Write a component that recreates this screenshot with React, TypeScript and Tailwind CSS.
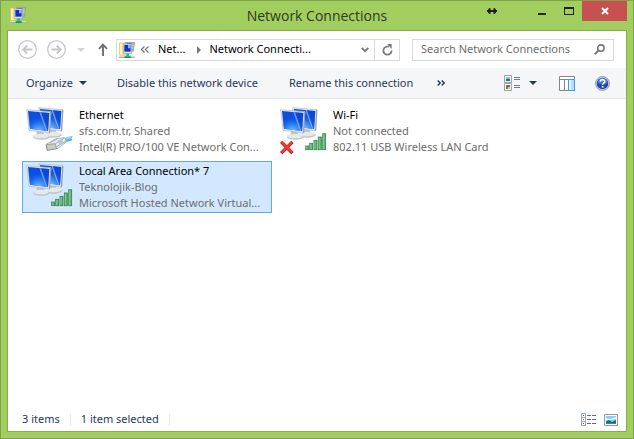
import React, { useState } from "react";
import clsx from "clsx";

type Status = "ethernet" | "wifi" | "disconnected";

interface Connection {
  name: string;
  state: string;
  device: string;
  status: Status;
}

const connections: Connection[] = [
  {
    name: "Ethernet",
    state: "sfs.com.tr, Shared",
    device: "Intel(R) PRO/100 VE Network Con...",
    status: "ethernet",
  },
  {
    name: "Wi-Fi",
    state: "Not connected",
    device: "802.11 USB Wireless LAN Card",
    status: "disconnected",
  },
  {
    name: "Local Area Connection* 7",
    state: "Teknolojik-Blog",
    device: "Microsoft Hosted Network Virtual...",
    status: "wifi",
  },
];

function NetworkFolderIcon() {
  return (
    <svg className="shrink-0" width="16" height="16" viewBox="0 0 48 48" aria-hidden="true">
      <path d="M1 3h18v36l-12 3-6-3z" fill="#f5df86" stroke="#d8bd63" strokeWidth="2" />
      <path d="M3 5h7v34H3z" fill="#fdf0b0" />
      <path d="M19 1h28l-4 27H20z" fill="#aeb7c0" stroke="#8993a0" strokeWidth="2" />
      <path d="M23 4h20l-3 20H24z" fill="#3c5cc8" />
      <path d="M38 4h6l-2 18h-5z" fill="#d9cd96" />
      <path d="M13 6h25v28H13z" fill="#e6ebf1" stroke="#8b98a8" strokeWidth="2" />
      <path d="M16 9h19v20H16z" fill="#1430c0" />
      <path d="M27 9h8v10h-8z" fill="#86aef6" />
      <path d="M0 42h47v5H0z" fill="#d4dbe0" />
      <path d="M0 45h47v3H0z" fill="#a5afb6" />
      <path d="M22 35h8v6h5v7H17v-7h5z" fill="#12c073" />
      <path d="M17 45h18v3H17z" fill="#0b9358" />
    </svg>
  );
}

function Monitor({ x, y }: { x: number; y: number }) {
  return (
    <g transform={`translate(${x} ${y})`}>
      <path d="M30 62h20l4 17H30z" fill="#bfc3c6" />
      <ellipse cx="44" cy="82" rx="25" ry="8" fill="#c0c4c7" />
      <ellipse cx="43" cy="79" rx="23" ry="7" fill="#e6e8ea" />
      <path d="M0 0 L73 6 L69 70 L7 62z" fill="#dfe3e6" stroke="#b4babf" strokeWidth="2" />
      <path d="M71 6l3 0-4 64-3 0z" fill="#8f9aa3" />
      <path d="M4 4 L68 10 L64 64 L10 57z" fill="#0b4ee0" />
      <path d="M4 4 L68 10 L64 64 L10 57z" fill="url(#glow)" />
      <path d="M38 7 L68 10 L64 64 L59 63z" fill="#0a3fc4" opacity="0.35" />
      <path d="M38 7l5 1 19 55-4 0z" fill="#c4e2ff" opacity="0.55" />
    </g>
  );
}

function SignalBars() {
  const bars = [
    [95, 138],
    [107, 130],
    [120, 121],
    [133, 111],
    [146, 101],
  ];
  return (
    <g>
      {bars.map(([x, y]) => (
        <rect
          key={x}
          x={x}
          y={y}
          width="9"
          height={149 - y}
          fill="url(#bar)"
          stroke="#3b8250"
          strokeWidth="2.5"
        />
      ))}
    </g>
  );
}

function EthernetPlug() {
  return (
    <g>
      <path d="M126 121l14-9 18-4-4 8 4 5-18 4-10 5z" fill="#4db4e4" />
      <path d="M134 115l22-6-4 6-16 5z" fill="#9bdcf6" />
      <path
        d="M78 133l30-17 26-3 6 12-26 20-32 6z"
        fill="#e6edf2"
        stroke="#8796a3"
        strokeWidth="2"
      />
      <path d="M79 134l26-3 5 15-28 5z" fill="#c3ccd3" stroke="#71808d" strokeWidth="2" />
      <path d="M85 137v10M91 136v11M97 135v10M103 134v10" stroke="#e0d080" strokeWidth="3" />
      <path d="M106 131l26-16M110 140l28-17M90 128l20-10" stroke="#7d8e9c" strokeWidth="2" />
      <path d="M112 121l14-3 3 8-12 7z" fill="#b7c6d1" />
    </g>
  );
}

function ConnectionIcon({ status }: { status: Status }) {
  return (
    <svg
      className="shrink-0"
      width="48"
      height="48"
      viewBox="18 21 144 144"
      aria-hidden="true"
    >
      <defs>
        <radialGradient id="glow" cx="0.5" cy="1" r="0.75">
          <stop offset="0" stopColor="#7cc4ff" />
          <stop offset="0.5" stopColor="#2f86f6" stopOpacity="0.8" />
          <stop offset="1" stopColor="#0b4ee0" stopOpacity="0" />
        </radialGradient>
        <linearGradient id="bar" x1="0" y1="0" x2="1" y2="0">
          <stop offset="0" stopColor="#9ad8a6" />
          <stop offset="1" stopColor="#4aa463" />
        </linearGradient>
      </defs>
      <Monitor x={56} y={23} />
      <Monitor x={20} y={29} />
      {status === "ethernet" ? <EthernetPlug /> : <SignalBars />}
      {status === "disconnected" && (
        <g strokeLinecap="square">
          <path d="M25 129l27 27M52 129l-27 27" stroke="#b5201b" strokeWidth="10" />
          <path d="M25 128l27 27M52 128l-27 27" stroke="#ea3b35" strokeWidth="7" />
        </g>
      )}
    </svg>
  );
}

function TitleBar() {
  return (
    <header className="grid h-[29px] grid-cols-[1fr_auto_1fr] items-start">
      <div className="pt-[6px] pl-[9px]">
        <NetworkFolderIcon />
      </div>
      <h1 className="font-['Open_Sans',sans-serif] text-[14px] leading-[29px] text-[#2e3a20]">
        Network Connections
      </h1>
      <div className="flex justify-end pr-[6px] text-[#222]">
        <button aria-label="Resize" className="mr-7 flex h-5 w-4 items-center justify-center">
          <svg width="12" height="8" viewBox="0 0 12 8">
            <path d="M2 4h8" stroke="currentColor" strokeWidth="2" />
            <path d="M1 4l3-3v6zM11 4L8 1v6z" fill="currentColor" stroke="currentColor" />
          </svg>
        </button>
        <button aria-label="Minimize" className="flex h-5 w-7 items-center justify-center">
          <svg width="8" height="10" viewBox="0 0 8 10">
            <path d="M0 7h8v2H0z" fill="currentColor" />
          </svg>
        </button>
        <button aria-label="Maximize" className="flex h-5 w-[26px] items-center justify-center">
          <svg width="10" height="8" viewBox="0 0 10 8">
            <path d="M0 0h10v8H0zM1 2v5h8V2z" fill="currentColor" fillRule="evenodd" />
          </svg>
        </button>
        <button
          aria-label="Close"
          className="flex h-5 w-[45px] items-center justify-center bg-[#c75050] text-white"
        >
          <svg width="8" height="8" viewBox="0 0 8 8">
            <path d="M1 1l6 6M7 1L1 7" stroke="currentColor" strokeWidth="2" />
          </svg>
        </button>
      </div>
    </header>
  );
}

function RoundArrow({ label, flip }: { label: string; flip?: boolean }) {
  return (
    <button aria-label={label} className="shrink-0 text-[#c6c6c6]">
      <svg
        width="19"
        height="19"
        viewBox="0 0 19 19"
        fill="none"
        stroke="currentColor"
        className={clsx(flip && "-scale-x-100")}
      >
        <circle cx="9.5" cy="9.5" r="8.8" strokeWidth="1.2" />
        <path d="M5.5 9.5h9M9.3 5.5l-4 4 4 4" strokeWidth="1.9" />
      </svg>
    </button>
  );
}

function AddressRow() {
  return (
    <div className="flex h-[37px] items-center pr-3 pl-[10px]">
      <RoundArrow label="Back" />
      <div className="w-[10px] shrink-0" />
      <RoundArrow label="Forward" flip />
      <button aria-label="Recent locations" className="ml-[11px] shrink-0">
        <svg width="8" height="4" viewBox="0 0 8 4">
          <path d="M0 0h8L4 4z" fill="#d4d4d4" />
        </svg>
      </button>
      <button aria-label="Up" className="mr-2 ml-[13px] shrink-0">
        <svg width="10" height="13" viewBox="0 0 10 13" fill="none" stroke="#6e6e6e">
          <path d="M5 13V2M1 5.8L5 1.6l4 4.2" strokeWidth="1.9" />
        </svg>
      </button>
      <nav
        aria-label="Address"
        className="flex h-[22px] min-w-0 flex-1 items-center border border-[#d9d9d9] pl-[2px]"
      >
        <NetworkFolderIcon />
        <button aria-label="Earlier locations" className="ml-[6px]">
          <svg width="8" height="7" viewBox="0 0 8 7" fill="none" stroke="#777" strokeWidth="1.3">
            <path d="M3.5.5l-3 3 3 3M7.5.5l-3 3 3 3" />
          </svg>
        </button>
        <button className="ml-[9px]">Net...</button>
        <svg className="mr-2 ml-3 shrink-0" width="4" height="8" viewBox="0 0 4 8" aria-hidden="true">
          <path d="M0 0l4 4-4 4z" fill="#777" />
        </svg>
        <button className="truncate">Network Connecti...</button>
        <button aria-label="Previous locations" className="mr-[5px] ml-auto shrink-0">
          <svg width="8" height="6" viewBox="0 0 8 6" fill="none" stroke="#777" strokeWidth="1.9">
            <path d="M.7.8L4 4.2 7.3.8" />
          </svg>
        </button>
        <button
          aria-label="Refresh"
          className="flex h-full w-[25px] shrink-0 items-center justify-center border-l border-[#d9d9d9]"
        >
          <svg width="11" height="12" viewBox="0 0 11 12">
            <path
              d="M7 2.8A4.1 4.1 0 1 0 9.6 6.6"
              fill="none"
              stroke="#777"
              strokeWidth="1.7"
            />
            <path d="M5.2 0h4.4v5z" fill="#777" />
          </svg>
        </button>
      </nav>
      <div className="ml-3 flex h-[22px] w-[202px] shrink-0 items-center border border-[#d9d9d9] pr-2 pl-2">
        <input
          type="search"
          aria-label="Search Network Connections"
          placeholder="Search Network Connections"
          className="min-w-0 flex-1 outline-none placeholder:text-[#6d6d6d]"
        />
        <svg width="11" height="11" viewBox="0 0 11 11" fill="none" stroke="#777" aria-hidden="true">
          <circle cx="6.9" cy="4.1" r="3.2" strokeWidth="1.6" />
          <path d="M4.6 6.4L.8 10.2" strokeWidth="2" />
        </svg>
      </div>
    </div>
  );
}

function DownCaret() {
  return (
    <svg width="8" height="4" viewBox="0 0 8 4" aria-hidden="true">
      <path d="M0 0h8L4 4z" fill="#1e395b" />
    </svg>
  );
}

function CommandBar() {
  return (
    <div
      role="toolbar"
      className="flex h-[31px] items-center border-b border-[#e3e5e8] bg-[#f5f6f7] pr-4 pl-[18px] text-[#1e395b]"
    >
      <button className="flex items-center gap-[6px]">
        Organize
        <DownCaret />
      </button>
      <button className="ml-[30px] whitespace-nowrap">Disable this network device</button>
      <button className="ml-[31px] whitespace-nowrap">Rename this connection</button>
      <button aria-label="More commands" className="ml-6">
        <svg width="8" height="6" viewBox="0 0 8 6" fill="none" stroke="#1e395b" strokeWidth="1.4">
          <path d="M.7.5L3.2 3 .7 5.5M4.7.5L7.2 3 4.7 5.5" />
        </svg>
      </button>
      <button aria-label="Change your view" className="ml-auto">
        <svg width="16" height="16" viewBox="0 0 16 16">
          <path d="M.5.5h7v7h-7zM.5 8.5h7v7h-7z" fill="#fff" stroke="#9aa3ad" />
          <path d="M2 2h4v2H2z" fill="#7fc0ee" />
          <path d="M2 4h4v2H2z" fill="#2b6e62" />
          <path d="M2 10h2v2H2z" fill="#d8472f" />
          <path d="M4 10h2v2H4z" fill="#3b76cf" />
          <path d="M2 12h2v2H2z" fill="#4fa33c" />
          <path d="M4 12h2v2H4z" fill="#e4b53a" />
          <path d="M10 2.5h6M10 4.5h6M10 10.5h6M10 12.5h6" stroke="#6f7c8a" />
        </svg>
      </button>
      <button aria-label="More view options" className="ml-[9px]">
        <DownCaret />
      </button>
      <button aria-label="Show the preview pane" className="ml-[22px]">
        <svg width="16" height="15" viewBox="0 0 16 15">
          <path d="M.5.5h15v14H.5z" fill="#fff" stroke="#858585" />
          <path d="M1 3.5h14M5.5 4v10" stroke="#858585" />
          <path d="M9.5 3.5h6v11h-6z" fill="#b6defa" stroke="#3f9be6" />
          <path d="M10 4h2v10h-2z" fill="#e3f4ff" />
        </svg>
      </button>
      <button aria-label="Help" className="ml-5">
        <svg width="15" height="15" viewBox="0 0 15 15">
          <circle cx="7.5" cy="7.5" r="6.9" fill="#dfe4ec" stroke="#8a93a3" />
          <circle cx="7.5" cy="7.5" r="5.8" fill="#1f48b8" />
          <path d="M2.5 7a5 5 0 0 1 10 0c-3 1.3-7 1.3-10 0z" fill="#4a74d6" />
          <path
            d="M5.3 5.8c0-2.9 4.5-2.8 4.5-.3 0 1.6-2.2 1.6-2.2 3.3"
            fill="none"
            stroke="#fff"
            strokeWidth="1.6"
          />
          <path d="M6.8 10h1.7v1.6H6.8z" fill="#fff" />
        </svg>
      </button>
    </div>
  );
}

interface ConnectionItemProps {
  connection: Connection;
  selected: boolean;
  onSelect: () => void;
}

function ConnectionItem({ connection, selected, onSelect }: ConnectionItemProps) {
  return (
    <button
      onClick={onSelect}
      aria-pressed={selected}
      className={clsx(
        "flex h-[52px] items-center gap-[5px] border pl-[3px] text-left leading-4",
        selected ? "border-[#66a7e8] bg-[#d1e8ff]" : "border-transparent",
      )}
    >
      <ConnectionIcon status={connection.status} />
      <span className="min-w-0 whitespace-nowrap">
        <span className="block text-black">{connection.name}</span>
        <span className="block text-[#6d6d6d]">{connection.state}</span>
        <span className="block text-[#6d6d6d]">{connection.device}</span>
      </span>
    </button>
  );
}

function StatusBar() {
  return (
    <footer className="flex h-[23px] items-center pr-2 pl-[14px] text-[#1e395b]">
      <span>{connections.length} items</span>
      <span className="ml-[10px] h-3 w-px bg-[#e8e8e8]" />
      <span className="ml-[10px]">1 item selected</span>
      <span className="ml-[10px] h-3 w-px bg-[#e8e8e8]" />
      <button aria-label="Details view" className="ml-auto">
        <svg width="15" height="13" viewBox="0 0 15 13">
          <path d="M.5.5h4v4h-4zM.5 4.5h4v4h-4zM.5 8.5h4v4h-4z" fill="#fff" stroke="#9aa7b5" />
          <path d="M2 2h1v1H2zM2 10h1v1H2z" fill="#3a6596" />
          <path d="M2 6h1v1H2z" fill="#d23a2a" />
          <path d="M6 2.5h4M11 2.5h4M6 6.5h4M11 6.5h4M6 10.5h4M11 10.5h4" stroke="#5d6f84" />
        </svg>
      </button>
      <button aria-label="Large thumbnails" className="ml-2">
        <svg width="14" height="12" viewBox="0 0 14 12">
          <path d="M.5.5h13v11H.5z" fill="#fff" stroke="#8d9bab" />
          <path d="M2 2h10v8H2z" fill="#8accf3" />
          <path d="M2 4l4 1 6-2v2L2 7z" fill="#e4f5fd" />
          <path d="M2 7l3-1 3 2 4-2v4H2z" fill="#1d6f73" />
          <path d="M2 9h10v1H2z" fill="#2a87c4" />
        </svg>
      </button>
    </footer>
  );
}

export default function App() {
  const [selected, setSelected] = useState("Local Area Connection* 7");

  return (
    <div className="flex min-h-screen flex-col border border-[#7f9f4c] bg-[#a2ce60] font-['Noto_Sans',sans-serif] text-[11px] text-black">
      <TitleBar />
      <main className="mx-[6px] mb-[6px] flex flex-1 flex-col border border-[#86ab50] bg-white">
        <AddressRow />
        <CommandBar />
        <section
          aria-label="Connections"
          className="grid flex-1 grid-cols-[repeat(auto-fill,250px)] content-start gap-1 pt-[6px] pl-[14px]"
        >
          {connections.map((connection) => (
            <ConnectionItem
              key={connection.name}
              connection={connection}
              selected={selected === connection.name}
              onSelect={() => setSelected(connection.name)}
            />
          ))}
        </section>
        <StatusBar />
      </main>
    </div>
  );
}
